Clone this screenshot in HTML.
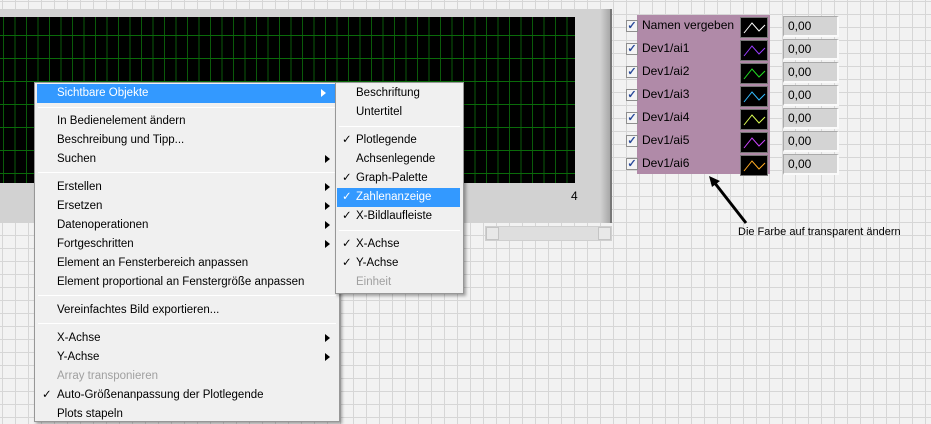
<!DOCTYPE html>
<html><head><meta charset="utf-8"><style>
*{margin:0;padding:0;box-sizing:border-box}
body{width:931px;height:413px;overflow:hidden;position:relative;font-family:"Liberation Sans",sans-serif;font-size:12px;color:#000;
background-color:#f2f2f2;
background-image:linear-gradient(#d6d6d6 1px,transparent 1px),linear-gradient(90deg,#d6d6d6 1px,transparent 1px);
background-size:13px 13px;background-position:2px 1px}
.abs{position:absolute}
.frame{left:0;top:9px;width:612px;height:214px;background:#d2d2d2;border-right:2px solid #777}
.frame:after{content:"";position:absolute;right:0;top:0;width:10px;height:100%;background:linear-gradient(90deg,#d2d2d2,#a8a8a8)}
.plot{left:0;top:17px;width:575px;height:166px;background-color:#000;
background-image:linear-gradient(#0a6a0a 1px,transparent 1px),linear-gradient(90deg,#0a5a0a 1px,transparent 1px);
background-size:100% 23px,11.5px 100%;background-position:0 18px,3px 0}
.menu{background:#f0f0f0;border:1px solid #979797;box-shadow:2px 2px 3px rgba(0,0,0,.35);font-size:11.5px}
.row{position:absolute;left:0;right:0;height:19px;line-height:19px}
.row span{position:absolute}
.hl{background:#3399ff;color:#fff}
.sep{position:absolute;height:1px;background:#c4c4c4;border-bottom:1px solid #fff}
.arr{position:absolute;right:9px;top:5px;width:0;height:0;border-left:5px solid #000;border-top:4px solid transparent;border-bottom:4px solid transparent}
.hl .arr{border-left-color:#fff}
.dis{color:#a0a0a0}
.leg{left:637px;top:15px;width:133px;height:159px;background:#b08aa8}
.cb{position:absolute;left:626px;width:12px;height:12px;border:1px solid #8f8f8f;background:#f4f4f4;font-size:11px;line-height:10px;text-align:center;color:#2a4a9a;font-weight:bold}
.lt{position:absolute;left:642px;font-size:12px}
.num{position:absolute;left:783px;width:56px;height:21px;background:#d4d4d4;border-top:1px solid #aaa;border-left:1px solid #aaa;border-right:2px solid #fafafa;border-bottom:2px solid #fafafa;line-height:18px;padding-left:4px;font-size:12px}
</style></head><body>
<div class="abs frame"></div>
<div class="abs plot"></div>
<div class="abs" style="left:571px;top:189px;font-size:12px">4</div>
<div class="abs" style="left:485px;top:226px;width:127px;height:15px;background:#dedede;border:1px solid #cfcfcf"></div>
<div class="abs" style="left:486px;top:227px;width:13px;height:13px;background:#e8e8e8;border:1px solid #c4c4c4"></div>
<div class="abs" style="left:598px;top:227px;width:13px;height:13px;background:#e8e8e8;border:1px solid #c4c4c4"></div>

<div class="abs menu" style="left:34px;top:82px;width:306px;height:340px">
 <div class="row hl" style="left:2px;right:4px;top:1px"><span style="left:20px">Sichtbare Objekte</span><i class="arr"></i></div>
 <div class="sep" style="left:3px;right:3px;top:24px"></div>
 <div class="row" style="top:29px"><span style="left:22px">In Bedienelement ändern</span></div>
 <div class="row" style="top:48px"><span style="left:22px">Beschreibung und Tipp...</span></div>
 <div class="row" style="top:67px"><span style="left:22px">Suchen</span><i class="arr"></i></div>
 <div class="sep" style="left:3px;right:3px;top:89px"></div>
 <div class="row" style="top:95px"><span style="left:22px">Erstellen</span><i class="arr"></i></div>
 <div class="row" style="top:114px"><span style="left:22px">Ersetzen</span><i class="arr"></i></div>
 <div class="row" style="top:133px"><span style="left:22px">Datenoperationen</span><i class="arr"></i></div>
 <div class="row" style="top:152px"><span style="left:22px">Fortgeschritten</span><i class="arr"></i></div>
 <div class="row" style="top:171px"><span style="left:22px">Element an Fensterbereich anpassen</span></div>
 <div class="row" style="top:190px"><span style="left:22px">Element proportional an Fenstergröße anpassen</span></div>
 <div class="sep" style="left:3px;right:3px;top:212px"></div>
 <div class="row" style="top:218px"><span style="left:22px">Vereinfachtes Bild exportieren...</span></div>
 <div class="sep" style="left:3px;right:3px;top:240px"></div>
 <div class="row" style="top:246px"><span style="left:22px">X-Achse</span><i class="arr"></i></div>
 <div class="row" style="top:265px"><span style="left:22px">Y-Achse</span><i class="arr"></i></div>
 <div class="row dis" style="top:284px"><span style="left:22px">Array transponieren</span></div>
 <div class="row" style="top:303px"><span style="left:7px">✓</span><span style="left:22px">Auto-Größenanpassung der Plotlegende</span></div>
 <div class="row" style="top:322px"><span style="left:22px">Plots stapeln</span></div>
</div>

<div class="abs menu" style="left:335px;top:82px;width:129px;height:212px">
 <div class="row" style="top:1px"><span style="left:20px">Beschriftung</span></div>
 <div class="row" style="top:20px"><span style="left:20px">Untertitel</span></div>
 <div class="sep" style="left:3px;right:3px;top:43px"></div>
 <div class="row" style="top:48px"><span style="left:6px">✓</span><span style="left:20px">Plotlegende</span></div>
 <div class="row" style="top:67px"><span style="left:20px">Achsenlegende</span></div>
 <div class="row" style="top:86px"><span style="left:6px">✓</span><span style="left:20px">Graph-Palette</span></div>
 <div class="row hl" style="left:1px;right:3px;top:105px"><span style="left:5px">✓</span><span style="left:19px">Zahlenanzeige</span></div>
 <div class="row" style="top:124px"><span style="left:6px">✓</span><span style="left:20px">X-Bildlaufleiste</span></div>
 <div class="sep" style="left:3px;right:3px;top:147px"></div>
 <div class="row" style="top:152px"><span style="left:6px">✓</span><span style="left:20px">X-Achse</span></div>
 <div class="row" style="top:171px"><span style="left:6px">✓</span><span style="left:20px">Y-Achse</span></div>
 <div class="row dis" style="top:190px"><span style="left:20px">Einheit</span></div>
</div>

<div class="abs leg"></div>
<div class="cb" style="top:20px">✓</div><div class="lt" style="top:18px">Namen vergeben</div>
<div class="cb" style="top:43px">✓</div><div class="lt" style="top:41px">Dev1/ai1</div>
<div class="cb" style="top:66px">✓</div><div class="lt" style="top:64px">Dev1/ai2</div>
<div class="cb" style="top:89px">✓</div><div class="lt" style="top:87px">Dev1/ai3</div>
<div class="cb" style="top:112px">✓</div><div class="lt" style="top:110px">Dev1/ai4</div>
<div class="cb" style="top:135px">✓</div><div class="lt" style="top:133px">Dev1/ai5</div>
<div class="cb" style="top:158px">✓</div><div class="lt" style="top:156px">Dev1/ai6</div>

<svg class="abs" style="left:740px;top:17px" width="30" height="160">
<g fill="#000" stroke="#777"><rect x="0.5" y="0.5" width="27" height="20"/><rect x="0.5" y="23.5" width="27" height="20"/><rect x="0.5" y="46.5" width="27" height="20"/><rect x="0.5" y="69.5" width="27" height="20"/><rect x="0.5" y="92.5" width="27" height="20"/><rect x="0.5" y="115.5" width="27" height="20"/><rect x="0.5" y="138.5" width="27" height="20"/></g>
<g fill="none" stroke-width="1">
<path d="M4 16 L12 6 L19 14 L25 8" stroke="#fff"/>
<path d="M4 39 L12 29 L19 37 L25 31" stroke="#9a3cff"/>
<path d="M4 62 L12 52 L19 60 L25 54" stroke="#22dd22"/>
<path d="M4 85 L12 75 L19 83 L25 77" stroke="#33bbff"/>
<path d="M4 108 L12 98 L19 106 L25 100" stroke="#ddff55"/>
<path d="M4 131 L12 121 L19 129 L25 123" stroke="#cc44ff"/>
<path d="M4 154 L12 144 L19 152 L25 146" stroke="#ffaa22"/>
</g></svg>

<div class="num" style="top:16px">0,00</div>
<div class="num" style="top:39px">0,00</div>
<div class="num" style="top:62px">0,00</div>
<div class="num" style="top:85px">0,00</div>
<div class="num" style="top:108px">0,00</div>
<div class="num" style="top:131px">0,00</div>
<div class="num" style="top:154px">0,00</div>

<svg class="abs" style="left:700px;top:170px" width="60" height="60">
<path d="M46 53 L14 12" stroke="#000" stroke-width="3"/>
<path d="M9 6 L20 11 L12 17 Z" fill="#000"/>
</svg>
<div class="abs" style="left:738px;top:226px;font-size:11px">Die Farbe auf transparent ändern</div>
</body></html>
